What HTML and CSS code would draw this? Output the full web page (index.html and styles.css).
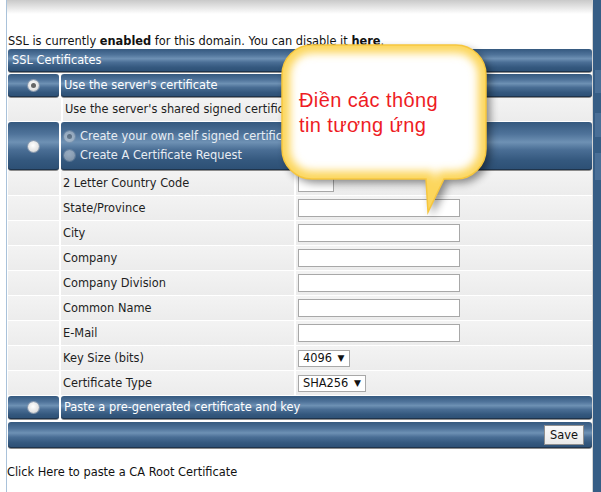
FILE: index.html
```html
<!DOCTYPE html>
<html lang="en">
<head>
    <meta charset="UTF-8">
    <title>SSL Certificates</title>
    <link rel="stylesheet" href="styles.css">
</head>
<body>
    <div class="layout">
        <div class="main">
            <div class="content">
                <div class="topshade"></div>
                <p class="intro">SSL is currently <b>enabled</b> for this domain. You can disable it <b>here</b>.</p>

                <div class="ssl">
                    <div class="bar head">SSL Certificates</div>

                    <div class="row">
                        <div class="bar pick"><span class="radio on"></span></div>
                        <div class="bar label">Use the server's certificate</div>
                    </div>
                    <div class="row plain">
                        <div class="cell"></div>
                        <div class="cell">Use the server's shared signed certificate.</div>
                    </div>

                    <div class="row tall">
                        <div class="bar pick"><span class="radio"></span></div>
                        <div class="bar label stack">
                            <div class="sub"><span class="radio small on"></span>Create your own self signed certificate</div>
                            <div class="sub"><span class="radio small"></span>Create A Certificate Request</div>
                        </div>
                    </div>

                    <div class="form">
                        <div class="cell"></div><div class="cell">2 Letter Country Code</div><div class="cell"><input class="field short" type="text"></div>
                        <div class="cell"></div><div class="cell">State/Province</div><div class="cell"><input class="field" type="text"></div>
                        <div class="cell"></div><div class="cell">City</div><div class="cell"><input class="field" type="text"></div>
                        <div class="cell"></div><div class="cell">Company</div><div class="cell"><input class="field" type="text"></div>
                        <div class="cell"></div><div class="cell">Company Division</div><div class="cell"><input class="field" type="text"></div>
                        <div class="cell"></div><div class="cell">Common Name</div><div class="cell"><input class="field" type="text"></div>
                        <div class="cell"></div><div class="cell">E-Mail</div><div class="cell"><input class="field" type="text"></div>
                        <div class="cell"></div><div class="cell">Key Size (bits)</div><div class="cell"><span class="select">4096 <i>&#9660;</i></span></div>
                        <div class="cell"></div><div class="cell">Certificate Type</div><div class="cell"><span class="select">SHA256 <i>&#9660;</i></span></div>
                    </div>

                    <div class="row">
                        <div class="bar pick"><span class="radio"></span></div>
                        <div class="bar label">Paste a pre-generated certificate and key</div>
                    </div>

                    <div class="bar savebar"><button class="save">Save</button></div>
                </div>

                <p class="ca">Click Here to paste a CA Root Certificate</p>
            </div>
        </div>
        <div class="strip">
            <span class="tab t1"></span>
            <span class="tab t2"></span>
            <span class="tab t3"></span>
        </div>
    </div>

    <div class="callout">
        <svg width="230" height="190" viewBox="276 38 230 190">
            <defs>
                <clipPath id="inside">
                    <path id="shape" d="M312 45 H456 A30 30 0 0 1 486 75 V149 A30 30 0 0 1 456 179 H444 L428 212 L426 179 H312 A30 30 0 0 1 282 149 V75 A30 30 0 0 1 312 45 Z"/>
                </clipPath>
                <filter id="soft" x="-20%" y="-20%" width="140%" height="140%"><feGaussianBlur stdDeviation="4"/></filter>
                <filter id="glow" x="-20%" y="-20%" width="140%" height="140%"><feGaussianBlur stdDeviation="4"/></filter>
            </defs>
            <use href="#shape" fill="#000" opacity="0.45" transform="translate(4 4)" filter="url(#soft)"/>
            <use href="#shape" fill="#fff"/>
            <g clip-path="url(#inside)">
                <use href="#shape" fill="none" stroke="#fcd65c" stroke-width="16" filter="url(#glow)"/>
            </g>
            <use href="#shape" fill="none" stroke="#f6c63e" stroke-width="1.5"/>
        </svg>
        <div class="note">Điền các thông<br>tin tương ứng</div>
    </div>
</body>
</html>
```

FILE: styles.css
```css
body {
    margin: 0;
    font-family: "DejaVu Sans", Verdana, sans-serif;
    font-size: 11.4px;
    color: #1e1e1e;
    background: #fff;
}
.layout {
    display: flex;
    height: 492px;
    overflow: hidden;
}
.main {
    flex: 0 0 593px;
    padding-left: 6px;
    box-sizing: border-box;
}
.content {
    border-left: 1px solid #a9c2da;
    border-right: 1px solid #d4d4d4;
    height: 100%;
}
.topshade {
    height: 14px;
    background: linear-gradient(#c9c9c9, #fff);
}
.intro {
    margin: 19px 0 0 1px;
    line-height: 16px;
    color: #111;
}
.ssl {
    margin-left: 1px;
    display: flex;
    flex-direction: column;
}
.bar {
    background: linear-gradient(#35597f 0%, #4f739a 25%, #6e91b4 42%, #4a6e95 58%, #34587e 80%, #2c4f74 100%);
    color: #fff;
    border-radius: 3px;
    box-shadow: inset 0 -1px 0 #1f344c, 0 1px 0 #8c8c8c;
    box-sizing: border-box;
}
.head {
    height: 23px;
    line-height: 23px;
    padding-left: 4px;
    margin-bottom: 2px;
}
.row {
    display: flex;
    gap: 2px;
    height: 23px;
    margin-bottom: 1px;
}
.row .pick {
    flex: 0 0 51px;
    display: flex;
    align-items: center;
    justify-content: center;
}
.row .label {
    flex: 1;
    line-height: 23px;
    padding-left: 3px;
}
.row.plain .cell:first-child {
    flex: 0 0 51px;
}
.row.plain .cell:last-child {
    flex: 1;
    line-height: 23px;
}
.row.tall {
    height: 48px;
}
.stack {
    display: flex;
    flex-direction: column;
    justify-content: center;
    padding-left: 9px;
}
.sub {
    display: flex;
    align-items: center;
    gap: 5px;
    line-height: 19px;
    color: #e8edf3;
}
.cell {
    background: linear-gradient(#f3f3f3, #ececec);
    padding-left: 2px;
}
.form {
    display: grid;
    grid-template-columns: 51px 233px 1fr;
    grid-auto-rows: 24px;
    gap: 1px 2px;
    margin-bottom: 1px;
}
.form .cell {
    display: flex;
    align-items: center;
}
.radio {
    width: 11px;
    height: 11px;
    border-radius: 50%;
    background: radial-gradient(circle at 45% 40%, #fff, #e4e4e4 60%, #b9b9b9);
    box-shadow: 0 0 0 1px #8a9bb0;
    display: inline-block;
    position: relative;
}
.radio.on::after {
    content: "";
    position: absolute;
    left: 3px;
    top: 3px;
    width: 5px;
    height: 5px;
    border-radius: 50%;
    background: #666;
}
.radio.small {
    opacity: 0.45;
}
.field {
    width: 162px;
    height: 18px;
    box-sizing: border-box;
    border: 1px solid #a8a8a8;
    background: #fff;
    padding: 0;
    font: inherit;
}
.field.short {
    width: 36px;
    height: 21px;
    margin-top: -3px;
}
.select {
    display: inline-block;
    height: 17px;
    line-height: 15px;
    box-sizing: border-box;
    border: 1px solid #a8a8a8;
    background: #fff;
    padding: 0 4px;
    color: #111;
}
.select i {
    font-style: normal;
    font-size: 9px;
    margin-left: 2px;
    vertical-align: 1px;
}
.savebar {
    height: 26px;
    margin-top: 2px;
    display: flex;
    align-items: center;
    justify-content: flex-end;
    padding-right: 8px;
}
.save {
    height: 20px;
    padding: 0 5px;
    font: inherit;
    color: #111;
    background: linear-gradient(#fafafa, #e9e9e9);
    border: 1px solid #8f8f8f;
    border-radius: 0;
}
.ca {
    margin: 17px 0 0;
    line-height: 14px;
    color: #111;
}
.strip {
    flex: 1;
    background: #365d85;
    display: flex;
    flex-direction: column;
}
.tab {
    display: block;
    background: #4a6f97;
    margin-left: 2px;
}
.t1 { margin-top: 70px; height: 23px; }
.t2 { margin-top: 20px; height: 24px; }
.t3 { margin-top: 16px; height: 27px; }
.callout {
    position: absolute;
    left: 276px;
    top: 38px;
    width: 230px;
    height: 190px;
}
.callout svg {
    display: block;
}
.note {
    position: absolute;
    left: 23px;
    top: 50px;
    font-family: "Liberation Sans", Arial, sans-serif;
    font-size: 20px;
    letter-spacing: 0.4px;
    line-height: 25px;
    color: #ee1c24;
    white-space: nowrap;
}
```
